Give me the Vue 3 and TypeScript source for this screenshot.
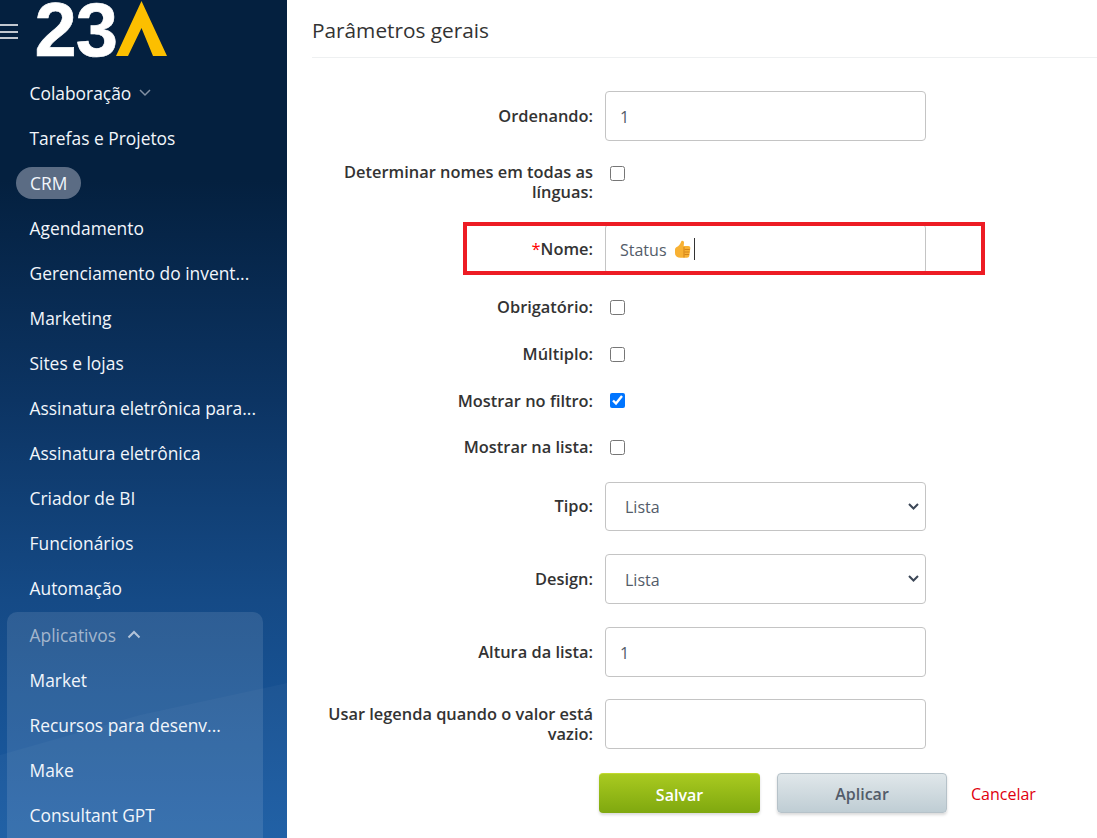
<script setup lang="ts">
const topItems: string[] = [
  'Agendamento',
  'Gerenciamento do invent...',
  'Marketing',
  'Sites e lojas',
  'Assinatura eletrônica para...',
  'Assinatura eletrônica',
  'Criador de BI',
  'Funcionários',
  'Automação',
]
const appItems: string[] = ['Market', 'Recursos para desenv...', 'Make', 'Consultant GPT']
const checkRows: { label: string; checked: boolean }[] = [
  { label: 'Obrigatório:', checked: false },
  { label: 'Múltiplo:', checked: false },
  { label: 'Mostrar no filtro:', checked: true },
  { label: 'Mostrar na lista:', checked: false },
]
</script>

<template>
  <div class="page">
    <aside class="sidebar">
      <div class="brand">
        <div class="burger"><i></i><i></i><i></i></div>
        <div class="logo">
          <span class="logo-num">23</span>
          <svg class="logo-a" width="52" height="56" viewBox="0 0 52 56">
            <polygon points="25.5,0 51,55 37,55 25.5,27 12,55 0,55" fill="#fcbf00" />
          </svg>
        </div>
      </div>
      <nav class="nav">
        <div class="item">
          Colaboração
          <svg class="chev" width="12" height="8" viewBox="0 0 12 8"><path d="M1 1l5 5 5-5" fill="none" stroke="#8290a3" stroke-width="1.5" /></svg>
        </div>
        <div class="item">Tarefas e Projetos</div>
        <div class="item"><span class="pill">CRM</span></div>
        <div v-for="t in topItems" :key="t" class="item">{{ t }}</div>
        <div class="apps">
          <div class="item muted">
            Aplicativos
            <svg class="chev" width="14" height="9" viewBox="0 0 14 9"><path d="M1.500 7.500l5.500-5.500 5.500 5.500" fill="none" stroke="#b3c3d8" stroke-width="2" /></svg>
          </div>
          <div v-for="t in appItems" :key="t" class="item">{{ t }}</div>
        </div>
      </nav>
    </aside>

    <main class="main">
      <h1 class="title">Parâmetros gerais</h1>
      <form class="form" @submit.prevent>
        <div class="row r-order">
          <label class="lab">Ordenando:</label>
          <input class="field" value="1" />
        </div>
        <div class="row r-names">
          <label class="lab">Determinar nomes em todas as<br />línguas:</label>
          <input class="check" type="checkbox" />
        </div>
        <div class="row r-name">
          <label class="lab"><span class="req">*</span>Nome:</label>
          <div class="field fake">
            <span>Status</span>
            <svg class="thumb" width="17" height="18" viewBox="0 0 17 18">
              <path d="M7.500 1c1.400-.6 2.600.3 2.500 1.800L9.700 6h4.600c1.500 0 2.200 1.100 2 2.300l-1 7.400c-.2 1.200-1 2-2.300 2H6.500C3 17.700 1 16 1 13V9.800c0-1.300.6-2 1.700-2.700C4.600 6 6.400 4.300 7 2z" fill="#f8b133" />
              <path d="M10.500 9.500h5.300M10.500 12h5M10.500 14.500h4.600M10 7v10.500" fill="none" stroke="#d4841a" stroke-width="1" />
            </svg>
            <i class="caret"></i>
          </div>
          <div class="redbox"></div>
        </div>
        <div v-for="c in checkRows" :key="c.label" class="row r-check">
          <label class="lab">{{ c.label }}</label>
          <input class="check" type="checkbox" :checked="c.checked" />
        </div>
        <div class="row r-type">
          <label class="lab">Tipo:</label>
          <select class="field sel"><option>Lista</option></select>
        </div>
        <div class="row r-design">
          <label class="lab">Design:</label>
          <select class="field sel"><option>Lista</option></select>
        </div>
        <div class="row r-height">
          <label class="lab">Altura da lista:</label>
          <input class="field" value="1" />
        </div>
        <div class="row r-legend">
          <label class="lab">Usar legenda quando o valor está<br />vazio:</label>
          <input class="field" value="" />
        </div>
        <div class="actions">
          <button class="btn save" type="button">Salvar</button>
          <button class="btn apply" type="button">Aplicar</button>
          <a class="cancel">Cancelar</a>
        </div>
      </form>
    </main>
  </div>
</template>

<style>
html, body { margin: 0; background: #fff; }
</style>

<style scoped>
.page {
  display: flex;
  width: 1097px;
  height: 838px;
  overflow: hidden;
  background: #fff;
  font-family: "Open Sans", "Noto Sans", sans-serif;
}
.sidebar {
  position: relative;
  flex: 0 0 287px;
  height: 838px;
  overflow: hidden;
  color: #fff;
  background: linear-gradient(180deg, #04203f 0, #04203f 180px, #0c3463 400px, #154a86 600px, #1a5ca4 838px);
}
.sidebar::after {
  content: "";
  position: absolute;
  inset: 0;
  background: rgba(255, 255, 255, 0.03);
  clip-path: polygon(0 755px, 140px 715px, 287px 683px, 287px 838px, 0 838px);
  pointer-events: none;
}
.brand {
  display: flex;
  height: 70px;
  position: relative;
  z-index: 1;
}
.burger {
  display: flex;
  flex-direction: column;
  gap: 4.500px;
  width: 18px;
  margin-top: 24px;
}
.burger i {
  display: block;
  height: 2px;
  background: #c2c8d0;
}
.logo {
  display: flex;
  align-items: flex-start;
  margin-left: 16.500px;
}
.logo-num {
  font-family: "Liberation Sans", sans-serif;
  font-weight: 700;
  font-size: 76px;
  line-height: 60px;
  letter-spacing: -1px;
  color: #fff;
  height: 60px;
  -webkit-text-stroke: 0.6px #fff;
}
.logo-a {
  margin: 1px 0 0 -1.500px;
}
.nav {
  position: relative;
  z-index: 1;
  font-size: 17.400px;
}
.item {
  display: flex;
  align-items: center;
  height: 45px;
  padding-left: 29.500px;
  white-space: nowrap;
  color: #f2f6fb;
}
.chev {
  margin-left: 8px;
}
.pill {
  margin-left: -13.500px;
  padding: 0 14px;
  height: 32px;
  line-height: 32px;
  border-radius: 16px;
  background: #5b6c84;
}
.apps {
  margin: 2px 0 0 7px;
  width: 256px;
  height: 300px;
  border-radius: 10px 10px 0 0;
  background: rgba(255, 255, 255, 0.11);
}
.apps .item {
  padding-left: 22.500px;
}
.item.muted {
  color: #a3b6cd;
}
.muted .chev {
  margin-left: 11px;
}
.main {
  flex: 1;
  padding-left: 25px;
}
.title {
  margin: 0;
  height: 58px;
  box-sizing: border-box;
  padding-top: 15px;
  border-bottom: 1px solid #eef0f1;
  font-size: 20.800px;
  line-height: 30px;
  font-weight: 400;
  color: #333;
}
.form {
  display: flex;
  flex-direction: column;
  padding-top: 33px;
}
.row {
  position: relative;
  display: flex;
  align-items: center;
}
.lab {
  width: 281px;
  flex: none;
  margin-right: 12px;
  text-align: right;
  font-size: 16.400px;
  line-height: 20px;
  font-weight: 600;
  color: #333;
  white-space: nowrap;
}
.req { color: #f00; font-weight: 400; }
.field {
  box-sizing: border-box;
  width: 321px;
  height: 100%;
  padding: 2px 14px 0;
  border: 1px solid #c4c4c4;
  border-radius: 4px;
  background: #fff;
  color: #535c69;
  font: 400 16px "Open Sans", "Noto Sans", sans-serif;
  outline: none;
}
.sel {
  padding-left: 19px;
  appearance: none;
  background: #fff url("data:image/svg+xml,%3Csvg xmlns='http://www.w3.org/2000/svg' width='11' height='7' viewBox='0 0 11 7'%3E%3Cpath d='M1 1l4.500 4.500L10 1' fill='none' stroke='%233c4757' stroke-width='2'/%3E%3C/svg%3E") no-repeat right 6px center;
}
.fake {
  display: flex;
  align-items: center;
}
.thumb { margin-left: 7px; margin-top: -2px; }
.caret {
  display: block;
  width: 1px;
  height: 22px;
  margin-left: 3px;
  margin-top: -2px;
  background: #333;
}
.redbox {
  position: absolute;
  left: 151px;
  top: -2px;
  width: 522px;
  height: 53px;
  box-sizing: border-box;
  border: 4px solid #ed1c24;
  pointer-events: none;
}
.check {
  width: 15px;
  height: 15px;
  margin: 0 0 0 5px;
}
.r-order { height: 50px; }
.r-names { height: 40px; margin-top: 21px; align-items: flex-start; }
.r-names .check { margin-top: 4px; }
.r-name { height: 50px; margin-top: 22px; }
.r-check { height: 46.700px; }
.r-name + .r-check { margin-top: 10px; }
.r-type { height: 49px; margin-top: 11px; }
.r-design { height: 50px; margin-top: 23px; }
.r-height { height: 50px; margin-top: 23px; }
.r-legend { height: 50px; margin-top: 22px; }
.actions {
  display: flex;
  align-items: center;
  height: 40px;
  margin: 24px 0 0 287px;
}
.btn {
  box-sizing: border-box;
  height: 40px;
  border-radius: 4px;
  font: 600 16px "Open Sans", "Noto Sans", sans-serif;
  padding: 3px 0 0;
}
.save {
  width: 161px;
  color: #fff;
  border: 0;
  border-top: 1px solid #c2da2c;
  background: linear-gradient(180deg, #a9ca20, #7fa80f);
  box-shadow: 0 2px 3px rgba(0, 0, 0, 0.15);
}
.apply {
  width: 170px;
  margin-left: 17px;
  color: #535c69;
  border: 1px solid #b6c2c9;
  background: linear-gradient(180deg, #e0e7ea, #bfcdd4);
  box-shadow: 0 2px 3px rgba(0, 0, 0, 0.15);
}
.cancel {
  margin: 2px 0 0 24px;
  color: #e0000e;
  font-size: 16px;
}
</style>
